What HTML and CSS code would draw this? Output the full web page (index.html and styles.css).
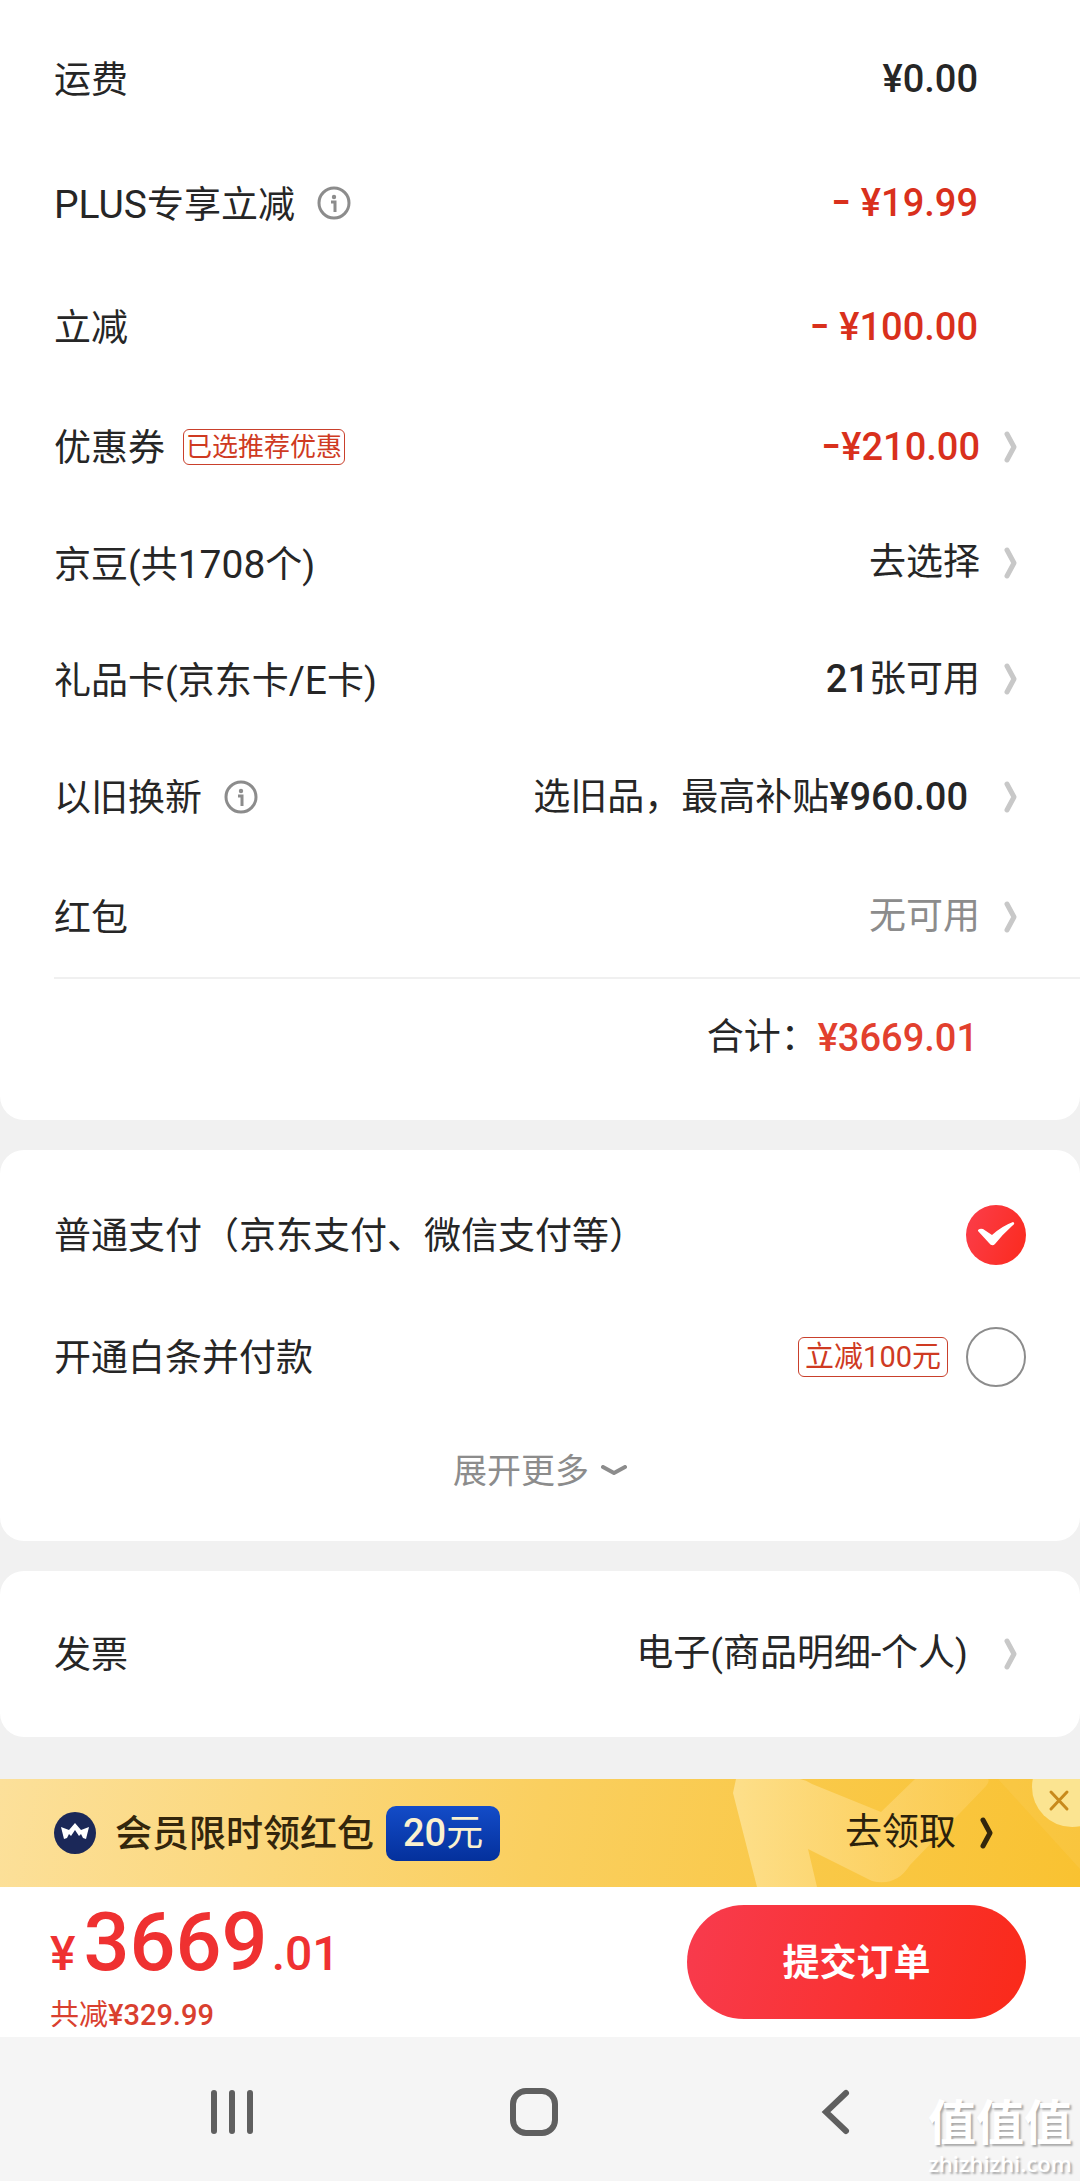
FILE: index.html
```html
<!DOCTYPE html>
<html lang="zh-CN">
<head>
<meta charset="utf-8">
<meta name="viewport" content="width=device-width, initial-scale=1">
<title>填写订单</title>
<link rel="stylesheet" href="styles.css">
</head>
<body>
<svg class="sprite" aria-hidden="true">
  <symbol id="chevron" viewBox="0 0 14 32"><path d="M3 3 10 16 3 29" fill="none" stroke="currentColor" stroke-width="5" stroke-linecap="round" stroke-linejoin="round"/></symbol>
  <symbol id="info" viewBox="0 0 34 34"><circle cx="17" cy="17" r="15" fill="none" stroke="currentColor" stroke-width="3"/><circle cx="17" cy="11" r="2.2" fill="currentColor"/><path d="M14 16h4v10" fill="none" stroke="currentColor" stroke-width="3"/></symbol>
</svg>
<main class="page">
  <section class="card costs">
    <div class="row"><span class="label">运费</span><span class="amount">¥0.00</span></div>
    <div class="row"><span class="label"><span class="latin">PLUS</span>专享立减</span><button class="info" type="button" aria-label="说明"><svg><use href="#info"/></svg></button><span class="amount red"><span class="minus">-</span> ¥19.99</span></div>
    <div class="row"><span class="label">立减</span><span class="amount red"><span class="minus">-</span> ¥100.00</span></div>
    <div class="row linked"><span class="label">优惠券</span><span class="tag small">已选推荐优惠</span><a class="value" href="#"><span class="num red"><span class="minus">-</span>¥210.00</span><svg class="chevron"><use href="#chevron"/></svg></a></div>
    <div class="row linked"><span class="label">京豆(共<span class="latin">1708</span>个)</span><a class="value" href="#">去选择<svg class="chevron"><use href="#chevron"/></svg></a></div>
    <div class="row linked"><span class="label">礼品卡(京东卡<span class="latin">/E</span>卡)</span><a class="value" href="#"><span><b class="num">21</b>张可用</span><svg class="chevron"><use href="#chevron"/></svg></a></div>
    <div class="row linked tall"><span class="label">以旧换新</span><button class="info" type="button" aria-label="说明"><svg><use href="#info"/></svg></button><a class="value wide" href="#"><span>选旧品，最高补贴<b class="num">¥960.00</b></span><svg class="chevron"><use href="#chevron"/></svg></a></div>
    <div class="row linked tall"><span class="label">红包</span><a class="value muted" href="#">无可用<svg class="chevron"><use href="#chevron"/></svg></a></div>
    <div class="total"><span>合计：</span><span class="num total-price">¥3669.01</span></div>
  </section>

  <section class="card payment">
    <div class="pay-row"><label class="label" for="pay-normal">普通支付（京东支付、微信支付等）</label><span class="radio"><input type="radio" name="pay" id="pay-normal" checked><svg class="check" viewBox="0 0 60 60" aria-hidden="true"><path d="M12 25q2-2 5-1l9 6Q36 21 47 17q3 1-1 4Q37 29 29 39q-3 3-6-1L12 26z" fill="#fff"/></svg></span></div>
    <div class="pay-row"><label class="label" for="pay-credit">开通白条并付款</label><span class="tag">立减100元</span><span class="radio"><input type="radio" name="pay" id="pay-credit"></span></div>
    <button class="more" type="button">展开更多<svg viewBox="0 0 26 12" aria-hidden="true"><path d="M2 2 13 8 24 2" fill="none" stroke="currentColor" stroke-width="4" stroke-linecap="round" stroke-linejoin="round"/></svg></button>
  </section>

  <section class="card invoice">
    <div class="row linked"><span class="label">发票</span><a class="value wide" href="#">电子(商品明细-个人)<svg class="chevron"><use href="#chevron"/></svg></a></div>
  </section>
</main>

<footer>
  <div class="banner">
    <svg class="banner-art" viewBox="0 0 360 108" aria-hidden="true"><defs><linearGradient id="shine" x1="0" x2="1"><stop offset="0" stop-color="#fddf8a"/><stop offset="1" stop-color="#fdd062" stop-opacity=".5"/></linearGradient></defs><path d="M16 0H80Q86 1 92 5L161 33 195 0H268Q270 2 266 7L190 86Q176 108 152 102L88 70 97 108H37L13 14Z" fill="url(#shine)"/><path d="M278 0H360V90Z" fill="#fdd062" fill-opacity=".25"/></svg>
    <svg class="crown" viewBox="0 0 42 42" aria-hidden="true"><circle cx="21" cy="21" r="21" fill="#1b2858"/><path d="M7 15 15 18 21 11 27 18 35 15 32 27 29 26 27 22 25 24 21 18 17 24 15 22 13 26 10 27Z" fill="#fff"/></svg>
    <strong class="label banner-title">会员限时领红包</strong>
    <span class="banner-tag"><span class="num">20</span>元</span>
    <a class="claim" href="#">去领取<svg class="chevron"><use href="#chevron"/></svg></a>
    <button class="close" type="button" aria-label="关闭"><svg viewBox="0 0 48 48"><circle cx="40" cy="8" r="40" fill="#fbe491"/><path d="M19 13 35 30M35 13 19 30" stroke="#c88a1c" stroke-width="3" stroke-linecap="round"/></svg></button>
  </div>
  <div class="checkout">
    <div class="sum">
      <div class="price"><span>¥</span><span class="yuan">3669</span><span>.01</span></div>
      <div class="saved">共减<b>¥329.99</b></div>
    </div>
    <button class="submit" type="button"><span class="label">提交订单</span></button>
  </div>
  <nav class="system">
    <button type="button" aria-label="最近任务"><svg viewBox="0 0 48 48"><path d="M6 5V43M24 5V43M42 5V43"/></svg></button>
    <button type="button" aria-label="主屏幕"><svg viewBox="0 0 48 48"><rect x="3" y="3" width="42" height="42" rx="13"/></svg></button>
    <button type="button" aria-label="返回"><svg viewBox="0 0 48 48"><path d="M34 5 14 24 34 43"/></svg></button>
    <div class="watermark"><span class="mark">值值值</span><span class="site">zhizhizhi.com</span></div>
  </nav>
</footer>
</body>
</html>
```
FILE: styles.css
```css
* { box-sizing: border-box; }
body {
  margin: 0;
  min-height: 100vh;
  display: flex;
  flex-direction: column;
  background: #f1f1f1;
  color: #262626;
  font: 400 37px/54px Roboto, "Noto Sans CJK SC", sans-serif;
}
button { padding: 0; border: 0; background: none; color: inherit; font: inherit; cursor: pointer; }
a { color: inherit; text-decoration: none; }
svg { display: block; }
.sprite { position: absolute; width: 0; height: 0; }

.page { flex: 1; display: flex; flex-direction: column; gap: 30px; padding-bottom: 42px; }
.card { background: #fff; border-radius: 24px; }
.costs { padding-top: 17px; border-radius: 0 0 24px 24px; }

.row { display: flex; align-items: center; min-height: 124px; padding: 0 102px 0 54px; }
.row.linked { min-height: 116px; padding-right: 62px; }
.row.tall { min-height: 120px; }
.label { padding-top: 4px; white-space: nowrap; }
.latin { font-size: 39px; }
.amount, .value { margin-left: auto; white-space: nowrap; }
.amount, .num { font-size: 38px; font-weight: 500; }
.red { color: #d9301c; }
.minus { font: 500 44px/38px Inter, sans-serif; }
.value { display: flex; align-items: center; gap: 24px; }
.value.wide { gap: 36px; }
.value.muted { color: #8c8c8c; }
.chevron { width: 14px; height: 32px; color: #c8c8c8; }
.info { margin-left: 22px; color: #8c8c8c; }
.info svg { width: 34px; height: 34px; }

.tag {
  padding: 0 6px;
  border: 1px solid #c9402c;
  border-radius: 6px;
  color: #cf3a22;
  font-size: 29px;
  line-height: 38px;
  white-space: nowrap;
}
.tag.small { margin-left: 18px; padding: 0 2px; font-size: 26px; line-height: 34px; }

.total {
  display: flex;
  justify-content: flex-end;
  margin-left: 54px;
  padding: 32px 102px 55px 0;
  border-top: 2px solid #f0f0f0;
}
.total-price { color: #e2402e; }

.payment { padding: 24px 0 17px; }
.pay-row { display: flex; align-items: center; min-height: 122px; padding: 0 54px; }
.pay-row .label { margin-right: auto; }
.radio { display: grid; width: 60px; height: 60px; margin-left: 18px; }
.radio > * { grid-area: 1 / 1; }
.radio input {
  appearance: none;
  width: 60px;
  height: 60px;
  margin: 0;
  border: 2px solid #8c8c8c;
  border-radius: 50%;
}
.radio input:checked { border: 0; background: linear-gradient(110deg, #fb3e4b, #fb2a1d); }
.check { pointer-events: none; }
.more {
  display: flex;
  align-items: center;
  justify-content: center;
  gap: 12px;
  width: 100%;
  height: 106px;
  color: #8c8c8c;
  font-size: 34px;
}
.more svg { width: 26px; height: 12px; }
.invoice { padding: 25px 0; }

.banner {
  position: relative;
  display: flex;
  align-items: center;
  height: 108px;
  padding: 0 86px 0 54px;
  overflow: hidden;
  background: linear-gradient(100deg, #fce09a, #facf5f 50%, #f9c231);
}
.banner-art { position: absolute; top: 0; right: 0; width: 360px; height: 108px; }
.crown { width: 42px; height: 42px; margin-right: 19px; }
.banner-title { color: #33260c; font-weight: 500; }
.banner-tag {
  margin-left: 12px;
  padding: 0 17px;
  border-radius: 10px;
  background: linear-gradient(#134cc8, #04309c);
  color: #faf1cf;
}
.claim { position: relative; display: flex; align-items: center; gap: 24px; margin-left: auto; color: #2b210b; }
.claim .chevron { color: #33260c; }
.close { position: absolute; top: 0; right: 0; }
.close svg { width: 48px; height: 48px; }

.checkout {
  display: flex;
  align-items: center;
  justify-content: space-between;
  height: 150px;
  padding: 0 54px 0 50px;
  background: #fff;
}
.sum { padding-top: 10px; }
.price { color: #ef3131; font-size: 48px; font-weight: 500; line-height: 84px; }
.yuan { padding: 0 4px 0 8px; font-size: 81px; }
.saved { color: #d9402f; font-size: 29px; line-height: 38px; }
.saved b { font-weight: 500; }
.submit {
  display: grid;
  place-items: center;
  width: 339px;
  height: 114px;
  border-radius: 57px;
  background: linear-gradient(105deg, #f83b4e, #fa2a19);
  color: #fff;
  font-weight: 700;
}

.system {
  position: relative;
  display: grid;
  grid-template-columns: repeat(3, 1fr);
  height: 144px;
  padding: 6px 93px 0 81px;
  background: #f5f5f5;
}
.system button { display: grid; place-items: center; }
.system svg { width: 48px; height: 48px; fill: none; stroke: #5f5f5f; stroke-width: 6; stroke-linecap: round; }
.watermark {
  position: absolute;
  right: 8px;
  bottom: 6px;
  display: flex;
  flex-direction: column;
  align-items: center;
  color: #fff;
  text-shadow: 2px 2px 2px #aaa;
}
.mark { font-size: 48px; font-weight: 700; line-height: 54px; }
.site { font: 600 22px/24px "Open Sans", sans-serif; }
```
